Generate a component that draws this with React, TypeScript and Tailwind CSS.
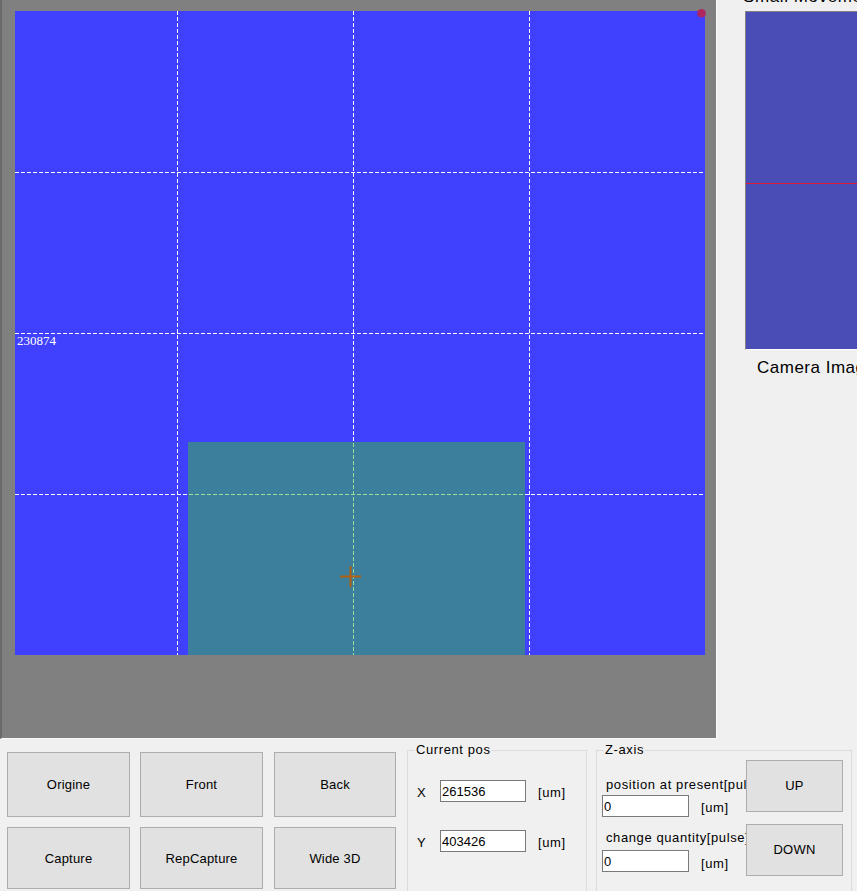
import React from "react";

function Btn({ label, className = "" }: { label: string; className?: string }) {
  return (
    <div
      className={
        "flex items-center justify-center bg-[#e1e1e1] border border-[#adadad] text-[13px] tracking-[0.2px] text-black " +
        className
      }
    >
      {label}
    </div>
  );
}

function Field({ value, className = "" }: { value: string; className?: string }) {
  return (
    <div
      className={
        "h-[22px] border border-[#7a7a7a] bg-white text-[13px] leading-[21px] pl-[1px] text-black " +
        className
      }
    >
      {value}
    </div>
  );
}

function Canvas() {
  const vx = [162.5, 338.5, 514.5];
  const hy = [161.5, 322.5, 483.5];
  return (
    <svg width="690" height="644" viewBox="0 0 690 644" className="block overflow-visible">
      <rect x="0" y="0" width="690" height="644" fill="#4040ff" />
      {vx.map((x) => (
        <line key={"v" + x} x1={x} y1={0} x2={x} y2={644} stroke="#ffffff" strokeWidth="1" strokeDasharray="4 2" />
      ))}
      {hy.map((y) => (
        <line key={"h" + y} x1={0} y1={y} x2={690} y2={y} stroke="#ffffff" strokeWidth="1" strokeDasharray="4 2" />
      ))}
      <text
        x="2"
        y="334"
        fill="#ffffff"
        fontSize="13"
        fontFamily="'Liberation Serif', 'DejaVu Serif', serif"
      >
        230874
      </text>
      <rect x="173" y="431" width="337" height="213" fill="rgb(54,190,57)" fillOpacity="0.5" />
      <line x1="325" y1="565.5" x2="346" y2="565.5" stroke="#b0600f" strokeWidth="2" />
      <line x1="335.5" y1="555" x2="335.5" y2="576" stroke="#b0600f" strokeWidth="2" />
      <circle cx="686.5" cy="2.3" r="4.3" fill="#b0265e" />
    </svg>
  );
}

export default function App() {
  return (
    <div className="w-[857px] h-[891px] bg-[#f0f0f0] overflow-hidden flex flex-col text-black font-['Liberation_Sans',Arial,sans-serif]">
      {/* top row */}
      <div className="flex h-[740px] shrink-0">
        <div className="w-[717px] h-[739px] shrink-0 bg-[#808080] border-l-2 border-l-[#6a6a6a] border-r border-r-[#fafafa] border-b border-b-[#fafafa] pl-[13px] pt-[11px]">
          <Canvas />
        </div>
        <div className="flex-1 overflow-hidden flex flex-col">
          <div className="ml-[26px] -mt-[12px] h-[17px] leading-[17px] text-[17px] whitespace-nowrap tracking-[0.6px]">
            Small Movement
          </div>
          <div className="ml-[28px] mt-[6px] w-[300px] h-[339px] shrink-0 border-l border-t border-[#808080] border-b border-b-white bg-[#4a4db5] flex flex-col">
            <div className="mt-[171px] h-[1px] bg-[#e01a35]" />
          </div>
          <div className="ml-[40px] mt-[8px] h-[20px] leading-[20px] text-[17px] whitespace-nowrap tracking-[0.5px]">
            Camera Image
          </div>
        </div>
      </div>

      {/* bottom row */}
      <div className="flex items-start h-[151px]">
        <div className="ml-[7px] mt-[12px] grid grid-cols-[123px_123px_123px] grid-rows-[65px_62px] gap-x-[10px] gap-y-[10px] shrink-0">
          <Btn label="Origine" className="pt-[1px]" />
          <Btn label="Front" className="pt-[1px]" />
          <Btn label="Back" className="ml-[1px] pt-[1px]" />
          <Btn label="Capture" className="pt-[2px]" />
          <Btn label="RepCapture" className="pt-[2px]" />
          <Btn label="Wide 3D" className="ml-[1px] pt-[2px]" />
        </div>

        {/* Current pos */}
        <div className="relative ml-[11px] mt-[10px] w-[180px] h-[150px] shrink-0 border border-b-0 border-[#dcdcdc] tracking-[0.6px]">
          <span className="absolute left-[7px] -top-[9px] px-[1px] bg-[#f0f0f0] text-[13px] leading-[15px] whitespace-nowrap">
            Current pos
          </span>
          <div className="pt-[29px] flex flex-col">
            <div className="flex items-center h-[22px]">
              <span className="ml-[9px] w-[23px] text-[13px] pt-[3px]">X</span>
              <Field value="261536" className="w-[86px] tracking-normal" />
              <span className="ml-[12px] text-[13px] pt-[3px]">[um]</span>
            </div>
            <div className="flex items-center h-[22px] mt-[28px]">
              <span className="ml-[9px] w-[23px] text-[13px] pt-[3px]">Y</span>
              <Field value="403426" className="w-[86px] tracking-normal" />
              <span className="ml-[12px] text-[13px] pt-[3px]">[um]</span>
            </div>
          </div>
        </div>

        {/* Z-axis */}
        <div className="relative ml-[9px] mt-[10px] w-[256px] h-[150px] shrink-0 border border-b-0 border-[#dcdcdc] tracking-[0.6px]">
          <span className="absolute left-[7px] -top-[9px] px-[1px] bg-[#f0f0f0] text-[13px] leading-[15px] whitespace-nowrap">
            Z-axis
          </span>
          <div className="flex">
            <div className="w-[149px] shrink-0 flex flex-col">
              <div className="mt-[26px] pl-[9px] h-[15px] leading-[15px] text-[13px] whitespace-nowrap overflow-hidden">
                position at present[pulse]
              </div>
              <div className="mt-[2px] ml-[5px] flex items-center">
                <Field value="0" className="w-[87px] tracking-normal" />
                <span className="ml-[12px] text-[13px] pt-[4px]">[um]</span>
              </div>
              <div className="mt-[12px] pl-[9px] h-[15px] leading-[15px] text-[13px] whitespace-nowrap overflow-hidden">
                change quantity[pulse]
              </div>
              <div className="mt-[5px] ml-[5px] flex items-center">
                <Field value="0" className="w-[87px] tracking-normal" />
                <span className="ml-[12px] text-[13px] pt-[4px]">[um]</span>
              </div>
            </div>
            <div className="flex flex-col tracking-[0.2px]">
              <Btn label="UP" className="mt-[9px] w-[97px] h-[52px]" />
              <Btn label="DOWN" className="mt-[12px] w-[97px] h-[52px]" />
            </div>
          </div>
        </div>
      </div>
    </div>
  );
}
